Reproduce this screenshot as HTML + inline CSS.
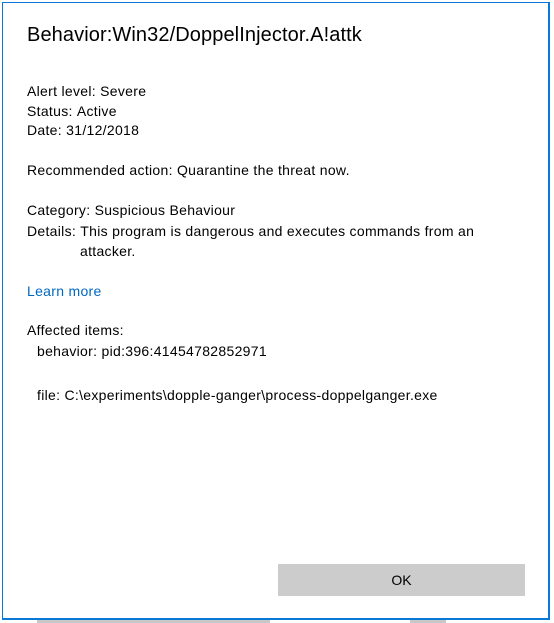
<!DOCTYPE html>
<html><head><meta charset="utf-8"><style>
html,body{margin:0;padding:0;background:#fff;width:554px;height:623px;overflow:hidden;font-family:"Liberation Sans",sans-serif;color:#000}
.box{position:absolute;left:2px;top:2px;width:545px;height:615px;border:2px solid #0a78d7;border-width:1.5px 2px 2px 1.5px;background:#fff}
.t{position:absolute;font-size:14px;white-space:nowrap;line-height:18px;letter-spacing:0.3px}
.title{position:absolute;left:27px;top:24px;font-size:20px;white-space:nowrap;letter-spacing:0.1px}
.btn{position:absolute;left:278px;top:564px;width:247px;height:32px;background:#cccccc;font-size:14px;text-align:center;line-height:32px}
.under{position:absolute;top:620px;height:3px;background:#c8c8c8}
</style></head><body>
<div class="under" style="left:37px;width:233px"></div>
<div class="under" style="left:410px;width:36px"></div>
<div class="box"></div>
<div class="title">Behavior:Win32/DoppelInjector.A!attk</div>
<div class="t" style="left:27px;top:82px">Alert level: Severe</div>
<div class="t" style="left:27px;top:102px">Status:&nbsp;Active</div>
<div class="t" style="left:27px;top:121px">Date:&nbsp;31/12/2018</div>
<div class="t" style="left:27px;top:161px">Recommended action:&nbsp;Quarantine the threat now.</div>
<div class="t" style="left:27px;top:201px">Category:&nbsp;Suspicious Behaviour</div>
<div class="t" style="left:27px;top:222px">Details:&nbsp;This program is dangerous and executes commands from an</div>
<div class="t" style="left:80px;top:242px">attacker.</div>
<div class="t" style="left:27px;top:282px;color:#0067c0">Learn more</div>
<div class="t" style="left:27px;top:321px">Affected items:</div>
<div class="t" style="left:37px;top:342px">behavior: pid:396:41454782852971</div>
<div class="t" style="left:37px;top:386px">file: C:\experiments\dopple-ganger\process-doppelganger.exe</div>
<div class="btn">OK</div>
</body></html>
